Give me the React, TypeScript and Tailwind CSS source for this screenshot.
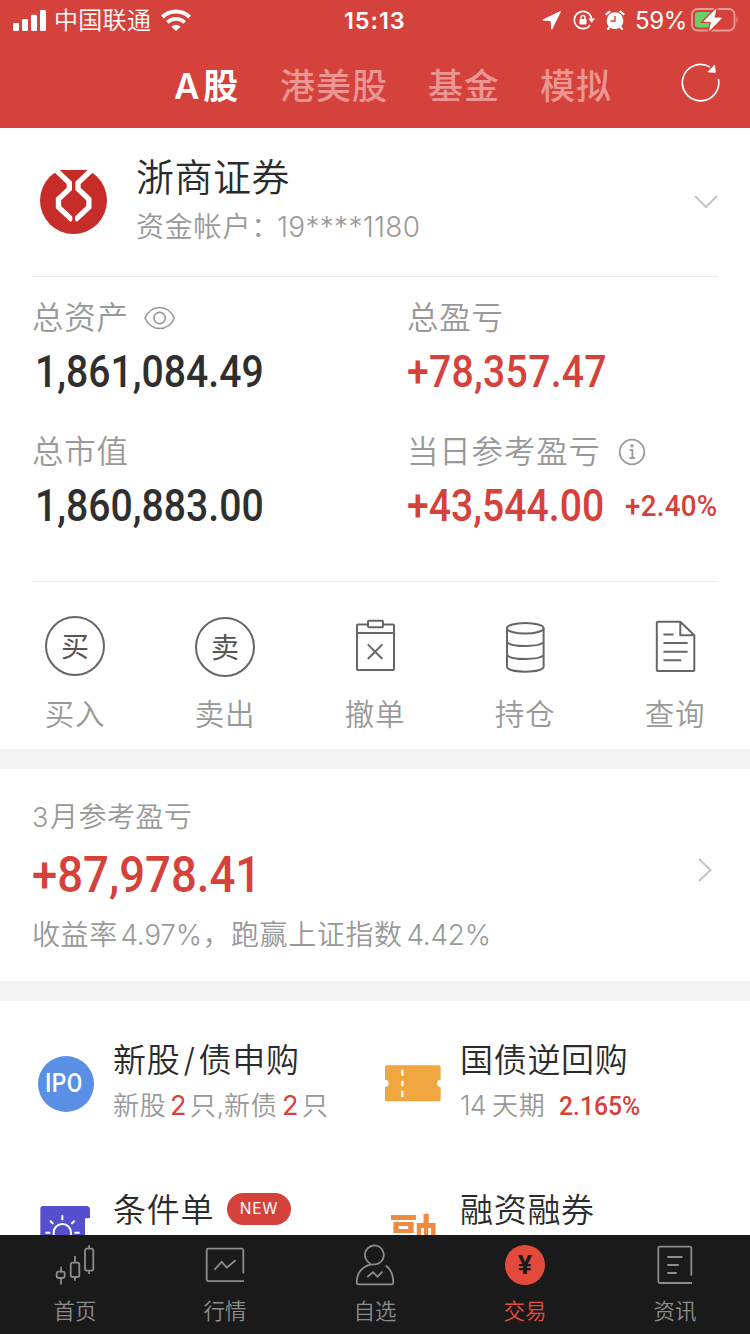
import type { ReactNode } from "react";
import clsx from "clsx";

const RED = "#d5423b";

interface NumProps {
  children: ReactNode;
  className?: string;
}

// Números condensados
function Num({ children, className }: NumProps) {
  return (
    <span className={clsx("block origin-left whitespace-nowrap font-['Roboto',sans-serif] font-medium", className)}>
      {children}
    </span>
  );
}

function StatusBar() {
  return (
    <div className="flex h-10 items-center pl-[13px] pr-[11px] text-white">
      <svg width="33" height="21" viewBox="39 27 99 63" fill="currentColor">
        <rect x="39" y="66" width="18" height="24" rx="4" />
        <rect x="66" y="54" width="18" height="36" rx="4" />
        <rect x="93" y="41" width="18" height="49" rx="4" />
        <rect x="120" y="27" width="18" height="63" rx="4" />
      </svg>
      <span className="ml-2 w-[99px] whitespace-nowrap pt-0.5 text-[24px] leading-10 font-[350] tracking-[0.3px]">中国联通</span>
      <svg className="ml-2" width="30" height="22" viewBox="485 28 90 66" fill="none" stroke="currentColor">
        <path d="M489 52 A59 59 0 0 1 571 52" strokeWidth="12" />
        <path d="M504 68 A38 38 0 0 1 556 68" strokeWidth="11" />
        <path d="M516 81 Q530 69 544 81 L530 94 Z" fill="currentColor" stroke="none" />
      </svg>
      <span className="ml-[153px] w-[64px] whitespace-nowrap pt-0.5 text-[23.5px] leading-10 font-semibold tracking-[0.9px]">15:13</span>
      <div className="ml-auto flex items-center">
        <svg width="19" height="19" viewBox="0 0 19 19" fill="currentColor">
          <path d="M18.5 .5 L0.8 9 L9 9.6 L9.8 18.2 Z" stroke="currentColor" strokeLinejoin="round" />
        </svg>
        <svg className="ml-3" width="22" height="20" viewBox="0 0 22 20" fill="none" stroke="currentColor" strokeWidth="1.7">
          <path d="M17 15 A8.6 8.6 0 1 1 18.5 9" />
          <path d="M15.2 8.6 H22 L18.6 12.8 Z" fill="currentColor" stroke="none" />
          <rect x="6.5" y="9" width="7" height="5.6" rx="1" fill="currentColor" stroke="none" />
          <path d="M8 9.5 V7.5 a2 2 0 0 1 4 0 V9.5" strokeWidth="1.4" />
        </svg>
        <svg className="ml-2.5" width="20" height="20" viewBox="0 0 20 20">
          <circle cx="10" cy="10.7" r="8.4" fill="currentColor" />
          <path d="M1.5 4.2 L4.6 1.6 M15.4 1.6 L18.5 4.2 M4.6 17 L3 19 M15.4 17 L17 19" stroke="currentColor" strokeWidth="2.2" strokeLinecap="round" />
          <path d="M10 6 V11 H5.5" fill="none" stroke={RED} strokeWidth="1.4" />
        </svg>
        <span className="ml-2.5 w-[51px] whitespace-nowrap pt-0.5 text-[24px] leading-10 tracking-[-0.3px]">59%</span>
        <svg className="ml-[5px]" width="48" height="24" viewBox="0 0 48 24">
          <rect x="1" y="1" width="42.5" height="21.5" rx="5.5" fill="none" stroke="#e99b97" strokeWidth="1.8" />
          <path d="M45.5 8.5 Q48 11.8 45.5 15 Z" fill="#e99b97" />
          <rect x="4" y="4" width="18" height="15.5" rx="3" fill="#69cf67" />
          <path d="M25 1 L13 13.4 H20.6 L18.5 22.5 L30.5 10 H23 Z" fill="white" stroke={RED} strokeWidth="3.4" paintOrder="stroke" />
          <path d="M25 1 L13 13.4 H20.6 L18.5 22.5 L30.5 10 H23 Z" fill="white" stroke="white" strokeWidth="0.8" strokeLinejoin="round" />
        </svg>
      </div>
    </div>
  );
}

function MarketTabs() {
  const tabs = [
    { label: "A 股", width: "w-[106px]", active: true },
    { label: "港美股", width: "w-[148px]", active: false },
    { label: "基金", width: "w-[112px]", active: false },
    { label: "模拟", width: "w-[140px]", active: false },
  ];

  return (
    <div className="flex h-[88px] pl-[174px]">
      {tabs.map((tab) => (
        <span
          key={tab.label}
          className={clsx(
            "shrink-0 whitespace-nowrap pt-0.5 text-[35px] leading-[88px] tracking-[1px]",
            tab.width,
            tab.active ? "font-semibold text-white [word-spacing:-7px]" : "font-medium text-[#eb9692]"
          )}
        >
          {tab.label}
        </span>
      ))}
      <svg className="mt-[22px]" width="41" height="41" viewBox="915 187 124 124" fill="none" stroke="white" strokeWidth="5">
        <path d="M1031 238 A55 55 0 1 1 1005 202" />
        <path d="M1020 196 L1022 219 L999 217 Z" fill="white" strokeWidth="2" />
      </svg>
    </div>
  );
}

function Account() {
  return (
    <div className="mx-8 flex h-[149px] border-b border-[#ebebeb]">
      <svg className="ml-2 mt-[42px]" width="67" height="64" viewBox="120 120 201 191">
        <circle cx="220.5" cy="211" r="100.5" fill="#c62d28" />
        <g fill="none" stroke="white" strokeWidth="16">
          <path d="M166 118 L208 158 V176 L175.500 207 V231 L217 270" />
          <path d="M276 118 L234 158 V176 L266.500 207 V231 L225 270" />
        </g>
        <path d="M221 150 V186 M221 246 V284" stroke="#c62d28" strokeWidth="8" />
        <path d="M221 178 L260 215 L221 254 L184 215 Z" fill="#c62d28" />
      </svg>
      <div className="ml-[29px] flex-1 pt-[22px]">
        <div className="text-[38px] leading-[54px] font-[350] tracking-[0.5px] text-[#2b2b2b]">浙商证券</div>
        <div className="flex text-[28px] leading-[46px] font-[350] tracking-[0.8px] text-[#999]">
          <span className="w-[141px] whitespace-nowrap">资金帐户：</span>
          <span className="tracking-[0.3px]">19****1180</span>
        </div>
      </div>
      <svg className="mt-[66px]" width="24" height="16" viewBox="0 0 24 16" fill="none" stroke="#c4c4c4" strokeWidth="2">
        <path d="M1 2 L12 13 L23 2" />
      </svg>
    </div>
  );
}

const labelClass = "flex h-[46px] items-center whitespace-nowrap text-[31.5px] leading-[46px] font-[350] tracking-[0.8px] text-[#999]";
const amountClass = "h-[62px] text-[44px] leading-[62px] scale-x-[0.89]";

function Assets() {
  return (
    <div className="mx-8 grid h-[305px] grid-cols-[375px_1fr] grid-rows-[134px_134px] border-b border-[#ebebeb] pt-[18px]">
      <div>
        <div className={labelClass}>
          总资产
          <svg className="ml-[15px]" width="32" height="24" viewBox="433 50 96 72" fill="none" stroke="#999" strokeWidth="5">
            <path d="M436 86 C455 44 505 44 524 86 C505 128 455 128 436 86 Z" strokeLinejoin="round" />
            <circle cx="480" cy="86" r="17" />
          </svg>
        </div>
        <Num className={clsx(amountClass, "ml-[3px] text-[#2f2f2f]")}>1,861,084.49</Num>
      </div>
      <div>
        <div className={labelClass}>总盈亏</div>
        <Num className={clsx(amountClass, "tracking-[0.3px] text-[#d5423b]")}>+78,357.47</Num>
      </div>
      <div>
        <div className={labelClass}>总市值</div>
        <Num className={clsx(amountClass, "ml-[3px] text-[#2f2f2f]")}>1,860,883.00</Num>
      </div>
      <div>
        <div className={labelClass}>
          当日参考盈亏
          <svg className="ml-[17px]" width="28" height="28" viewBox="0 0 28 28" fill="none" stroke="#999" strokeWidth="1.8">
            <circle cx="14" cy="14" r="12.3" />
            <path d="M11.6 12.2 H14.4 V20 M11.4 20.2 H17" />
            <circle cx="14" cy="7.8" r="1.7" fill="#999" stroke="none" />
          </svg>
        </div>
        <div className="flex text-[#d5423b]">
          <Num className={clsx(amountClass, "w-[218px]")}>+43,544.00</Num>
          <Num className="text-[29.5px] leading-[62px] tracking-[0.3px] scale-x-[0.94]">+2.40%</Num>
        </div>
      </div>
    </div>
  );
}

function Actions() {
  const circleClass = "flex size-[60px] items-center justify-center rounded-full border-2 border-[#666] pt-0.5 text-[28px] leading-none font-normal text-[#555]";
  const lineProps = { width: 60, height: 60, viewBox: "0 0 60 60", fill: "none", stroke: "#666", strokeWidth: 2 };

  const actions = [
    { label: "买入", icon: <div className={circleClass}>买</div> },
    { label: "卖出", icon: <div className={clsx(circleClass, "mt-px")}>卖</div> },
    {
      label: "撤单",
      icon: (
        <svg {...lineProps}>
          <path d="M23 8.5 H13 a1 1 0 0 0 -1 1 V53 a1 1 0 0 0 1 1 H48 a1 1 0 0 0 1 -1 V9.5 a1 1 0 0 0 -1 -1 H38 M12 17 H49" />
          <rect x="23" y="4.8" width="15" height="6.4" rx="1" />
          <path d="M22.8 28.4 L37.4 43 M37.4 28.4 L22.8 43" />
        </svg>
      ),
    },
    {
      label: "持仓",
      icon: (
        <svg {...lineProps}>
          <ellipse cx="30.3" cy="12.2" rx="18.3" ry="5.3" />
          <path d="M12 12.2 V51 C14 57.3 46.6 57.3 48.6 51 V12.2 M12 26 C16 31.3 44.6 31.3 48.6 26 M12 39 C16 44.3 44.6 44.3 48.6 39" />
        </svg>
      ),
    },
    {
      label: "查询",
      icon: (
        <svg {...lineProps}>
          <path d="M35.3 5.8 H12.8 a1 1 0 0 0 -1 1 V54 a1 1 0 0 0 1 1 H48.3 a1 1 0 0 0 1 -1 V19.3 L35.3 5.8 V19.3 H49.3" strokeLinejoin="round" />
          <path d="M18.5 18.5 H28.6 M18.5 27 H42.6 M18.5 35.7 H42.6 M18.5 44.3 H36.3" />
        </svg>
      ),
    },
  ];

  return (
    <div className="grid h-[167px] grid-cols-5 pt-[34px]">
      {actions.map((action) => (
        <div key={action.label} className="flex flex-col items-center">
          <div className="h-[60px]">{action.icon}</div>
          <span className="mt-[18px] text-[29.5px] leading-10 font-[350] tracking-[0.8px] text-[#999]">{action.label}</span>
        </div>
      ))}
    </div>
  );
}

function MonthlyProfit() {
  return (
    <div className="flex h-[212px] items-start pl-8 pr-[37px] pt-7 text-[28px] font-[350] text-[#999]">
      <div className="flex-1">
        <div className="leading-10 tracking-[0.5px]">
          <span className="mr-px text-[27px]">3</span>月参考盈亏
        </div>
        <Num className="h-[75px] text-[50px] leading-[74px] text-[#d5423b] scale-x-[0.91]">+87,978.41</Num>
        <div className="flex leading-[44px] tracking-[0.6px]">
          <span className="w-[88.5px] whitespace-nowrap">收益率</span>
          <span className="w-[82px] whitespace-nowrap tracking-[-0.3px]">4.97%</span>
          <span className="w-[28.5px]">，</span>
          <span className="w-[175.5px] whitespace-nowrap">跑赢上证指数</span>
          <span className="tracking-[-0.3px]">4.42%</span>
        </div>
      </div>
      <svg className="mt-[60px]" width="16" height="26" viewBox="0 0 16 26" fill="none" stroke="#c4c4c4" strokeWidth="2">
        <path d="M2 2 L13.5 13 L2 24" />
      </svg>
    </div>
  );
}

function Services() {
  const titleClass = "whitespace-nowrap text-[33px] leading-[52px] font-[350] tracking-[0.7px] text-[#2b2b2b]";
  const hintClass = "flex whitespace-nowrap text-[26px] leading-[40px] font-[350] tracking-[0.8px] text-[#999]";

  return (
    <div className="grid h-[234px] grid-cols-[347px_1fr] grid-rows-[150px_150px] overflow-hidden pl-[38px] pt-[33px]">
      <div className="flex">
        <div className="mt-[22px] flex size-14 items-center justify-center rounded-full bg-[#5990e6] text-white">
          <Num className="origin-center text-[25px] tracking-[0.5px] scale-x-90">IPO</Num>
        </div>
        <div className="ml-[19px]">
          <div className={titleClass}>新股<span className="mx-[3px]">/</span>债申购</div>
          <div className={hintClass}>
            <span className="w-[57px]">新股</span>
            <span className="w-[20px] text-[27px] font-normal text-[#d5423b]">2</span>
            <span className="w-[34px]">只,</span>
            <span className="w-[58px]">新债</span>
            <span className="w-[20px] text-[27px] font-normal text-[#d5423b]">2</span>
            <span>只</span>
          </div>
        </div>
      </div>

      <div className="flex">
        <svg className="mt-[31px]" width="56" height="37" viewBox="30 136 168 111">
          <path d="M36 137 H192 Q197 137 197 142 V180 A11 11 0 0 0 197 202 V240 Q197 245 192 245 H36 Q30 245 30 240 V202 A11 11 0 0 0 30 180 V142 Q30 137 36 137 Z" fill="#f0a742" />
          <path d="M82 150 V168 M82 183 V200 M82 213 V232" stroke="white" strokeWidth="7" />
        </svg>
        <div className="ml-[19px]">
          <div className={titleClass}>国债逆回购</div>
          <div className={hintClass}>
            <span className="w-[32px] text-[27px] tracking-[-0.8px]">14</span>
            <span className="w-[67px]">天期</span>
            <Num className="text-[26px] tracking-[0px] text-[#d5423b] scale-x-95">2.165%</Num>
          </div>
        </div>
      </div>

      <div className="flex">
        <svg className="ml-0.5 mt-[22px]" width="50" height="56" viewBox="121 560 150 168">
          <path d="M130 560 H260 Q271 560 271 571 V592 Q271 597 266 597 H256 V728 H122 V568 Q122 560 130 560 Z" fill="#5450cd" />
          <g fill="none" stroke="white" strokeWidth="6">
            <circle cx="188" cy="640" r="26" />
            <path d="M188 588 V603 M151 604 L161 614 M225 604 L215 614 M137 640 H152 M224 640 H240" />
          </g>
        </svg>
        <div className="ml-[23px] flex h-[50px] items-center">
          <div className={clsx(titleClass, "pt-0.5")}>条件单</div>
          <span className="ml-[13px] flex h-8 w-16 items-center justify-center rounded-full bg-[#d5423b] text-[15.5px] font-normal tracking-[0.8px] text-white">
            NEW
          </span>
        </div>
      </div>

      <div className="flex">
        <span className="ml-1 mt-[26px] w-[50px] text-[50px] leading-[56px] font-bold text-[#ee8b42]">融</span>
        <div className={clsx(titleClass, "ml-[21px]")}>融资融券</div>
      </div>
    </div>
  );
}

function TabBar() {
  const iconProps = { width: 60, height: 44, viewBox: "0 0 60 44", fill: "none", stroke: "#8c8c8c", strokeWidth: 1.8 };

  const items = [
    {
      label: "首页",
      icon: (
        <svg {...iconProps}>
          <rect x="11.7" y="28.7" width="8" height="6.3" rx="2" />
          <rect x="25.7" y="19.7" width="8.6" height="14.3" rx="2" />
          <rect x="40" y="5.7" width="8.3" height="22" rx="2" />
          <path d="M16 23.7 V28.7 M16 35 V41.5 M30 13 V19.7 M30 34 V37.8 M44 2.3 V5.7 M44 27.7 V31" />
        </svg>
      ),
    },
    {
      label: "行情",
      icon: (
        <svg {...iconProps}>
          <path d="M48.3 30.5 V7.2 a1.5 1.5 0 0 0 -1.5 -1.5 H13.2 a1.5 1.5 0 0 0 -1.5 1.5 V36.6 a1.5 1.5 0 0 0 1.5 1.5 H49" />
          <path d="M19.3 26.9 L26.7 18.9 L31.7 24.5 L40.7 17.3" />
        </svg>
      ),
    },
    {
      label: "自选",
      icon: (
        <svg {...iconProps}>
          <path d="M25.5 20.5 A9.4 9.4 0 1 1 30 21.3 C19 20.8 11.7 29 11.7 39.8 a1.5 1.5 0 0 0 1.5 1.5 H46.8 a1.5 1.5 0 0 0 1.5 -1.5 C48.3 32 45.5 26 40.7 22.5" />
          <path d="M22.3 34 L28 29.2 L32.5 33.7 L37.6 28.7" />
        </svg>
      ),
    },
    {
      label: "交易",
      active: true,
      icon: (
        <div className="flex h-11 items-center justify-center">
          <span className="flex size-10 items-center justify-center rounded-full bg-[#e34a3c] text-[26px] leading-none font-bold text-[#1a1a1a]">
            ¥
          </span>
        </div>
      ),
    },
    {
      label: "资讯",
      icon: (
        <svg {...iconProps}>
          <path d="M46.3 32.7 V5.2 a1.5 1.5 0 0 0 -1.5 -1.5 H14.8 a1.5 1.5 0 0 0 -1.5 1.5 V38.5 a1.5 1.5 0 0 0 1.5 1.5 H47" />
          <path d="M22.3 14 H37.5 M22.3 22 H33.8 M22.3 30 H31.8" />
        </svg>
      ),
    },
  ];

  return (
    <nav className="grid h-[99px] grid-cols-5 bg-[#1a1a1a] pt-2">
      {items.map((item) => (
        <div key={item.label} className="flex flex-col items-center">
          {item.icon}
          <span
            className={clsx(
              "mt-[9px] text-[21.5px] leading-[30px] font-[350]",
              item.active ? "text-[#e34a3c]" : "text-[#8c8c8c]"
            )}
          >
            {item.label}
          </span>
        </div>
      ))}
    </nav>
  );
}

export default function App() {
  return (
    <div className="flex h-[1334px] w-[750px] flex-col overflow-hidden bg-white font-['Inter','Noto_Sans_CJK_SC',sans-serif]">
      <header className="h-32 bg-[#d5423b]">
        <StatusBar />
        <MarketTabs />
      </header>
      <Account />
      <Assets />
      <Actions />
      <div className="h-5 bg-[#f4f4f4]" />
      <MonthlyProfit />
      <div className="h-5 bg-[#f4f4f4]" />
      <Services />
      <TabBar />
    </div>
  );
}
